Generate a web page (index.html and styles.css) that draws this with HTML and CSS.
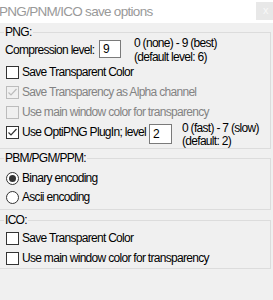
FILE: index.html
```html
<!DOCTYPE html>
<html lang="en">
  <head>
    <meta charset="UTF-8" />
    <title>PNG/PNM/ICO save options</title>
    <link rel="stylesheet" href="styles.css">
  </head>
  <body>
    <div class="titlebar">
      <span class="title">PNG/PNM/ICO save options</span>
      <span class="close">x</span>
    </div>

    <fieldset class="group png">
      <legend>PNG:</legend>
      <div class="level-row">
        <label class="field-label">Compression level:</label>
        <input class="num" type="text" value="9" />
        <div class="hint">
          <div>0 (none) - 9 (best)</div>
          <div>(default level: 6)</div>
        </div>
      </div>
      <label class="check"><span class="box"></span>Save Transparent Color</label>
      <label class="check disabled">
        <span class="box">
          <svg width="11" height="11" viewBox="0 0 11 11"><polyline points="1.5,5.5 4,8 9.5,2" /></svg>
        </span>Save Transparency as Alpha channel</label>
      <label class="check disabled"><span class="box"></span>Use main window color for transparency</label>
      <div class="check opti">
        <span class="box">
          <svg width="11" height="11" viewBox="0 0 11 11"><polyline points="1.5,5.5 4,8 9.5,2" /></svg>
        </span>
        <span class="opti-text">Use OptiPNG PlugIn; level</span>
        <input class="num level" type="text" value="2" />
        <div class="hint small">
          <div>0 (fast) - 7 (slow)</div>
          <div>(default: 2)</div>
        </div>
      </div>
    </fieldset>

    <fieldset class="group pbm">
      <legend>PBM/PGM/PPM:</legend>
      <label class="radio"><span class="dot on"></span>Binary encoding</label>
      <label class="radio"><span class="dot"></span>Ascii encoding</label>
    </fieldset>

    <fieldset class="group ico">
      <legend>ICO:</legend>
      <label class="check"><span class="box"></span>Save Transparent Color</label>
      <label class="check"><span class="box"></span>Use main window color for transparency</label>
    </fieldset>
  </body>
</html>
```

FILE: styles.css
```css
body {
  margin: 0;
  height: 300px;
  overflow: hidden;
  background: #f0f0f0;
  font-family: "Liberation Sans", Arial, sans-serif;
  font-size: 12px;
  letter-spacing: -0.7px;
  color: #000;
}

.titlebar {
  height: 23px;
  background: #fff;
  display: flex;
  justify-content: space-between;
  align-items: flex-start;
}

.title {
  margin-left: -1px;
  font-size: 13.5px;
  line-height: 23px;
  letter-spacing: -0.7px;
  color: #999;
}

.close {
  width: 19px;
  height: 18px;
  margin: 2px -2px 0 0;
  background: #e8e8e8;
  color: #f8f8f8;
  font-size: 11px;
  line-height: 17px;
  text-align: center;
}

.group {
  margin: 3px 2px 0 -1px;
  padding: 0 0 0 5px;
  border: 1px solid #dcdcdc;
  min-width: 0;
}

.group legend {
  margin-left: -1px;
  padding: 0 1px;
  line-height: 12px;
}

.level-row {
  display: flex;
  align-items: flex-start;
  height: 24px;
}

.field-label {
  width: 94px;
  margin-top: 5px;
  line-height: 14px;
}

.num {
  box-sizing: border-box;
  width: 22px;
  height: 18px;
  margin: 2px 0 0;
  padding: 0 0 0 3px;
  border: 1px solid #7a7a7a;
  background: #fff;
  font: inherit;
  color: #000;
  outline: none;
}

.hint {
  margin: -2px 0 0 13px;
  line-height: 14px;
  white-space: nowrap;
}

.check {
  display: flex;
  align-items: flex-start;
  height: 20px;
  line-height: 20px;
  margin-left: 1px;
  white-space: nowrap;
}

.box {
  box-sizing: border-box;
  width: 13px;
  height: 13px;
  margin: 4px 3px 0 0;
  border: 1px solid #333;
  background: #fff;
  flex: none;
}

.box svg {
  display: block;
  fill: none;
  stroke: #333;
  stroke-width: 1.2;
}

.disabled {
  color: #838383;
}

.disabled .box {
  border-color: #bcbcbc;
  background: #f0f0f0;
}

.disabled .box svg {
  stroke: #bcbcbc;
}

.opti {
  height: 26px;
}

.opti-text {
  width: 127px;
}

.num.level {
  width: 23px;
  height: 20px;
}

.hint.small {
  margin: 0 0 0 10px;
  line-height: 13px;
}

.pbm {
  padding-top: 5px;
  padding-bottom: 2px;
}

.radio {
  display: flex;
  align-items: flex-start;
  height: 19px;
  line-height: 19px;
  margin-left: 1px;
}

.dot {
  box-sizing: border-box;
  width: 13px;
  height: 13px;
  margin: 3px 3px 0 0;
  border: 1px solid #333;
  border-radius: 50%;
  background: #fff;
  display: flex;
  align-items: center;
  justify-content: center;
}

.dot.on::after {
  content: "";
  width: 7px;
  height: 7px;
  border-radius: 50%;
  background: #333;
}

.ico {
  margin-top: 4px;
  padding-top: 2px;
}
```
